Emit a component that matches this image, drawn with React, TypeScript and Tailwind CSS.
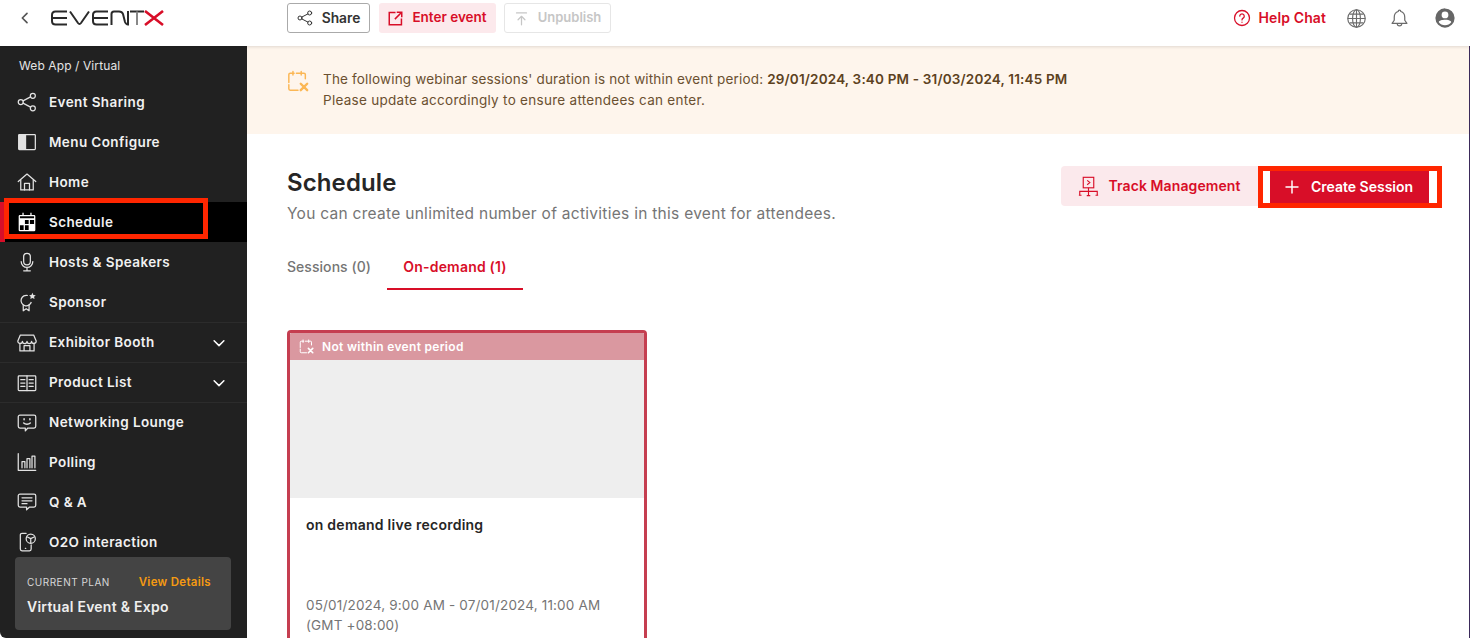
import React from "react";

const F = { fontFamily: '"Inter", "Liberation Sans", sans-serif' };

type IconProps = { className?: string };
const S = ({ className = "", children, vb = "0 0 24 24", sw = 1.5 }: { className?: string; children: React.ReactNode; vb?: string; sw?: number }) => (
  <svg viewBox={vb} fill="none" stroke="currentColor" strokeWidth={sw} strokeLinecap="round" strokeLinejoin="round" className={className}>{children}</svg>
);

const ShareI = ({ className }: IconProps) => (
  <S className={className}><circle cx="4.500" cy="12" r="3" /><circle cx="19" cy="4.500" r="3" /><circle cx="19" cy="19.500" r="3" /><path d="M7.200 10.600 16.300 5.900M7.200 13.400l9.100 4.700" /></S>
);
const MenuI = ({ className }: IconProps) => (
  <svg viewBox="0 0 24 24" className={className} fill="none"><rect x="2" y="3" width="20" height="18" rx="1" stroke="currentColor" strokeWidth="1.500" /><rect x="2" y="3" width="9" height="18" fill="currentColor" /></svg>
);
const HomeI = ({ className }: IconProps) => (
  <S className={className}><path d="M1.500 11.500 12 2.500l10.500 9" /><path d="M4.500 9.500V21.500h15V9.500" /><path d="M9 21.500v-8h6v8" /></S>
);
const CalI = ({ className }: IconProps) => (
  <svg viewBox="0 0 24 24" className={className}>
    <path fill="#fff" d="M6.500 1h1.500v2.500h8V1h1.500v2.500h3A1.500 1.500 0 0 1 22 5v16.500a1.500 1.500 0 0 1-1.500 1.500h-17A1.500 1.500 0 0 1 2 21.500V5a1.500 1.500 0 0 1 1.500-1.500h3z" />
    <path fill="#000" d="M3.500 5h17v2.500h-17z" />
    <path fill="#000" d="M9.500 9.500h4.500v5h-4.500zM15.500 9.500h5v5h-5zM3.500 16h4.500v5.500H3.500zM9.500 16h4.500v5.500H9.500z" />
  </svg>
);
const MicI = ({ className }: IconProps) => (
  <S className={className}><rect x="8" y="1.500" width="8" height="14" rx="4" /><path d="M5 11.500a7 7 0 0 0 14 0M12 18.500V22.500M8 22.500h8" /></S>
);
const SponsorI = ({ className }: IconProps) => (
  <svg viewBox="0 0 24 24" className={className} fill="none" stroke="currentColor" strokeWidth="1.500" strokeLinejoin="round"><path d="M13 4.200A6.300 6.300 0 1 0 17.200 12" /><path d="M7.500 15v7.500l3.500-2.500 3.500 2.500V15" /><path fill="currentColor" stroke="none" d="m18.500 1 1.200 2.500 2.800.4-2 1.900.5 2.700-2.500-1.300L16 8.500l.5-2.700-2-1.900 2.800-.4z" /></svg>
);
const StoreI = ({ className }: IconProps) => (
  <S className={className}><path d="M4 2.500h16l3 7a2.700 2.700 0 0 1-5.500.5 2.700 2.700 0 0 1-5.500 0 2.700 2.700 0 0 1-5.500 0A2.700 2.700 0 0 1 1 9.500z" /><path d="M3.500 12.500V21.500h17v-9M8.500 21.500V15h7v6.500" /></S>
);
const BookI = ({ className }: IconProps) => (
  <S className={className}><rect x="1.500" y="3.500" width="21" height="17.500" rx="1" /><path d="M12 3.500V21M4.500 8h5M4.500 12h5M4.500 16h5M14.500 8h5M14.500 12h5M14.500 16h5" /></S>
);
const ChatFaceI = ({ className }: IconProps) => (
  <S className={className}><path d="M3.500 2.500h17a2 2 0 0 1 2 2v11.500a2 2 0 0 1-2 2H13l-3 3.500V18H3.500a2 2 0 0 1-2-2V4.500a2 2 0 0 1 2-2z" /><path d="M8.500 7V8M15.500 7V8M8 12c2 1.800 6 1.800 8 0" strokeWidth="1.800" /></S>
);
const PollI = ({ className }: IconProps) => (
  <S className={className}><path d="M1.500 2v20h21" /><path d="M6 19v-7.500h3.500V19M12 19V8h3.500v11M18 19V5h3.500v14" /></S>
);
const QaI = ({ className }: IconProps) => (
  <S className={className}><path d="M3.500 2.500h17a2 2 0 0 1 2 2v11.500a2 2 0 0 1-2 2H15l-3.500 3.500V18H3.500a2 2 0 0 1-2-2V4.500a2 2 0 0 1 2-2z" /><path d="M6 7h12M6 10.500h12M6 14h6" /></S>
);
const O2oI = ({ className }: IconProps) => (
  <S className={className}><path d="M11 1.500H6a2 2 0 0 0-2 2v17a2 2 0 0 0 2 2h9a2 2 0 0 0 2-2v-5" /><path d="M10 19.500h.5" /><circle cx="16.500" cy="8" r="5.500" /><path d="m12.500 6 4 2 4-2M16.500 8v5" /></S>
);
const Chevron = () => (
  <S className="w-[18px] h-[18px] ml-auto mr-[19px]" sw={2}><path d="m5.500 9 6.500 6.500L18.500 9" /></S>
);
const CalX = ({ className }: IconProps) => (
  <svg viewBox="0 0 24 24" className={className} fill="none" stroke="currentColor" strokeWidth="1.600" strokeLinecap="round">
    <path d="M12 22H3.500A1.500 1.500 0 0 1 2 20.500V5A1.500 1.500 0 0 1 3.500 3.500h15A1.500 1.500 0 0 1 20 5v7" strokeDasharray="15 2.500" />
    <path d="M6.500 1.500v4M15.500 1.500v4" />
    <path d="m15 15 7 7M22 15l-7 7" strokeWidth="2.600" />
  </svg>
);

const Logo = () => (
  <svg viewBox="0 0 114 16" className="w-[114px] h-[16px]" fill="none" strokeWidth="2">
    <g stroke="#2a2a2a">
      <path d="M16 1.500H4.500Q1 1.500 1 5v6q0 3.500 3.500 3.500H16M2 8h14" />
      <path d="M19 1.500 27 13q1.500 2 3 0l8-11.500" />
      <path d="M57 1.500H45.500Q42 1.500 42 5v6q0 3.500 3.500 3.500H57M43 8h14" />
      <path d="M60.500 15V4q0-2.500 2.500-2.500h5q3 0 4 2.500l2 8q1 2.500 3 2.500V1" />
      <path d="M79 1.500h14" /><path d="M86 1.500V15" stroke="#888" />
    </g>
    <path d="m94 1 18 14M112 1 94 15" stroke="#d80e28" strokeWidth="2.600" />
  </svg>
);

const items: [string, (p: IconProps) => React.ReactElement, boolean?, boolean?][] = [
  ["Event Sharing", ShareI],
  ["Menu Configure", MenuI],
  ["Home", HomeI],
  ["Schedule", CalI, false, true],
  ["Hosts & Speakers", MicI],
  ["Sponsor", SponsorI],
  ["Exhibitor Booth", StoreI, true],
  ["Product List", BookI, true],
  ["Networking Lounge", ChatFaceI],
  ["Polling", PollI],
  ["Q & A", QaI],
  ["O2O interaction", O2oI],
];

function Sidebar() {
  return (
    <aside className="relative w-[247px] shrink-0 h-[592px] bg-[#212121] text-white overflow-hidden rounded-bl-md">
      <div className="h-[36px] pl-[19px] pt-[12px] text-[12px] tracking-[0.1px] leading-[16px] text-[#e4e4e4]">Web App / Virtual</div>
      {items.map(([label, Icon, chev, active], i) => (
        <div
          key={label}
          className={`flex items-center h-[40px] ${active ? "bg-black border-l-[5px] border-[#d80e28] pl-[12px]" : "pl-[17px]"} ${i === 6 || i === 7 || i === 8 ? "border-t border-[#2c2c2c]" : ""}`}
        >
          <Icon className="w-[20px] h-[20px] shrink-0 text-[#e2e2e2]" />
          <span className="ml-[12px] text-[13.500px] font-semibold tracking-[0.4px] text-[#f1f1f1]">{label}</span>
          {chev && <Chevron />}
        </div>
      ))}
      <div className="absolute left-[15px] top-[511px] w-[216px] h-[73px] rounded-[4px] bg-[#444] px-[12px] pt-[17px]">
        <div className="flex justify-between pr-[8px] items-center">
          <span className="text-[10px] tracking-[0.5px] leading-[16px] text-[#d8d8d8]">CURRENT PLAN</span>
          <span className="text-[11.500px] font-semibold tracking-[0.3px] leading-[16px] text-[#f59a12]">View Details</span>
        </div>
        <div className="mt-[7px] text-[14px] font-semibold tracking-[0.25px] leading-[20px] text-[#eee]">Virtual Event &amp; Expo</div>
      </div>
    </aside>
  );
}

function TopBar() {
  return (
    <header className="h-[46px] pb-[10px] flex items-center bg-white shadow-[0_1px_3px_rgba(0,0,0,0.12)] relative z-10">
      <div className="w-[247px] shrink-0 flex items-center">
        <S className="w-[16px] h-[16px] ml-[17px] text-[#555]" sw={2.500}><path d="M15 5l-7 7 7 7" /></S>
        <div className="ml-[18px]"><Logo /></div>
      </div>
      <div className="ml-[40px] flex items-center">
        <button className="h-[30px] w-[83px] flex items-center justify-center gap-[9px] border border-[#aaa] rounded-[3px] text-[13.800px] leading-[26px] pb-[1px] font-semibold text-[#333]">
          <ShareI className="w-[16px] h-[16px] mt-[1px]" />Share
        </button>
        <button className="ml-[9px] h-[30px] w-[117px] flex items-center justify-center gap-[9px] pb-[1px] bg-[#fce9ec] rounded-[3px] text-[13.500px] font-semibold text-[#d80e28]">
          <svg viewBox="0 0 24 24" className="w-[15px] h-[15px] mt-[1px]" fill="none" stroke="currentColor" strokeWidth="2.400"><path d="M12 2.500H2v19.500h19.500V12M11 13 21.500 2.500M14 2h8v8" /></svg>
          Enter event
        </button>
        <button className="ml-[8px] h-[30px] w-[107px] flex items-center justify-center gap-[9px] border border-[#e6e6e6] rounded-[3px] text-[13px] font-semibold text-[#c6c6c6]">
          <S className="w-[15px] h-[15px]" sw={2}><path d="M4 3h16M12 22V9M6.500 14 12 8.500l5.500 5.500" /></S>
          Unpublish
        </button>
      </div>
      <div className="ml-auto flex items-center text-[#6b6b6b]">
        <svg viewBox="0 0 24 24" className="w-[18px] h-[18px] text-[#d80e28]" fill="none" stroke="currentColor" strokeWidth="1.700" strokeLinecap="round"><circle cx="12" cy="12" r="10" /><path d="M9 9.500a3 3 0 1 1 4.500 2.600c-1 .6-1.500 1.200-1.500 2.400M12 17.500v.2" /></svg>
        <span className="ml-[8px] text-[14px] tracking-[0.1px] font-semibold text-[#d80e28] pb-[1px]">Help Chat</span>
        <svg viewBox="0 0 24 24" className="ml-[20px] w-[21px] h-[21px]" fill="none" stroke="currentColor" strokeWidth="1.300"><circle cx="12" cy="12" r="10" /><ellipse cx="12" cy="12" rx="4.500" ry="10" /><path d="M2 12h20M12 2v20M4 7h16M4 17h16" /></svg>
        <svg viewBox="0 0 24 24" className="ml-[22px] mr-[1px] w-[21px] h-[21px]" fill="none" stroke="currentColor" strokeWidth="1.400" strokeLinejoin="round"><path d="M12 2.500a1.500 1.500 0 0 1 1.500 1.500c3 .8 4.500 3.200 4.500 6.500v3.500l2.500 3.500h-17L6 14v-3.500C6 7.200 7.500 4.800 10.500 4A1.500 1.500 0 0 1 12 2.500z" /><path d="M9.500 18a2.500 2.500 0 0 0 5 0" /></svg>
        <svg viewBox="0 0 24 24" className="ml-[23px] mr-[14px] w-[22px] h-[22px]" fill="#666"><path fillRule="evenodd" d="M12 1.500a10.500 10.500 0 1 0 0 21 10.500 10.500 0 0 0 0-21zM12 5a3.700 3.700 0 1 1 0 7.400A3.700 3.700 0 0 1 12 5zm0 15c-2.800 0-5.300-1.300-6.800-3.300C5.300 14.800 9.300 14 12 14s6.700.8 6.800 2.700c-1.500 2-4 3.300-6.800 3.300z" /></svg>
      </div>
    </header>
  );
}

function Banner() {
  return (
    <div className="h-[88px] bg-[#fef5ec] pl-[40px] pt-[24px] flex">
      <CalX className="w-[22px] h-[22px] text-[#fbb755] shrink-0" />
      <div className="ml-[14px] mt-[-1px] text-[13.500px] tracking-[0.17px] leading-[21px] text-[#6b5030]">
        <div>The following webinar sessions' duration is not within event period: <span className="font-semibold text-[#5c4120]">29/01/2024, 3:40 PM - 31/03/2024, 11:45 PM</span></div>
        <div className="tracking-[0.28px]">Please update accordingly to ensure attendees can enter.</div>
      </div>
    </div>
  );
}

function Content() {
  return (
    <div className="px-[40px] bg-white">
      <div className="flex items-start justify-between pt-[32px]">
        <div className="pt-[1px]">
          <h1 className="text-[24px] tracking-[0.1px] leading-[32px] font-semibold text-[#262626]">Schedule</h1>
          <p className="mt-[5px] text-[15.500px] tracking-[0.28px] leading-[20px] text-[#757575]">You can create unlimited number of activities in this event for attendees.</p>
        </div>
        <div className="flex mr-[1px] gap-[12px]">
          <button className="w-[197px] h-[40px] pb-[1px] flex items-center justify-center gap-[9px] bg-[#fbe9ec] rounded-l-[4px] text-[14px] font-semibold tracking-[0.1px] text-[#d80e28]">
            <svg viewBox="0 0 24 24" className="w-[21px] h-[21px] mt-[1px]" fill="none" stroke="currentColor" strokeWidth="1.300"><rect x="6" y="1.500" width="12" height="12" /><path d="m10.500 5 3 2.500-3 2.500M12 13.500v9M2 22v-4.500h20V22M1 22h3M20 22h3M10 22.500h4" /></svg>
            Track Management
          </button>
          <button className="w-[159px] h-[32px] mt-[5px] pb-[2px] pr-[2px] flex items-center justify-center gap-[11px] bg-[#d80e28] text-[14px] font-semibold text-white">
            <S className="w-[16px] h-[16px] mt-[2px]" sw={2.200}><path d="M12 3v18M3 12h18" /></S>
            Create Session
          </button>
        </div>
      </div>
      <div className="mt-[23px] flex text-[14px] h-[43px]">
        <div className="w-[100px] flex items-center pb-[4px] font-medium tracking-[0.05px] text-[#757575]">Sessions (0)</div>
        <div className="w-[136px] flex items-center justify-center pb-[3px] font-semibold tracking-[0.2px] text-[#d80e28] border-b-2 border-[#d80e28]">On-demand (1)</div>
      </div>
      <div className="mt-[40px] w-[360px] border-[3px] border-b-0 border-[#c53e50] rounded-t-[4px] h-[310px] overflow-hidden">
        <div className="h-[27px] bg-[#da98a0] flex items-center pl-[9px] text-white">
          <CalX className="w-[15px] h-[15px]" />
          <span className="ml-[8px] text-[12px] tracking-[0.3px] font-semibold">Not within event period</span>
        </div>
        <div className="h-[138px] bg-[#eeeeee]" />
        <div className="px-[16px] pt-[17px]">
          <div className="text-[14px] tracking-[0.25px] leading-[20px] font-semibold text-[#262626]">on demand live recording</div>
          <div className="mt-[60px] text-[13.500px] tracking-[0.17px] leading-[20px] text-[#757575]">05/01/2024, 9:00 AM - 07/01/2024, 11:00 AM<br />(GMT +08:00)</div>
        </div>
      </div>
    </div>
  );
}

export default function App() {
  return (
    <div style={F} className="relative w-[1470px] h-[638px] overflow-hidden bg-white">
      <TopBar />
      <div className="flex">
        <Sidebar />
        <main className="flex-1 min-w-0">
          <Banner />
          <Content />
        </main>
      </div>
      <div className="absolute left-[4px] top-[198px] w-[204px] h-[41px] border-[5px] border-[#ff2600] pointer-events-none" />
      <div className="absolute left-[1258px] top-[166px] w-[184px] h-[42px] border-[5px] border-[#ff2600] pointer-events-none" />
      <div className="absolute right-0 top-0 w-[1px] h-[638px] bg-[#3b2a5a]" />
    </div>
  );
}
